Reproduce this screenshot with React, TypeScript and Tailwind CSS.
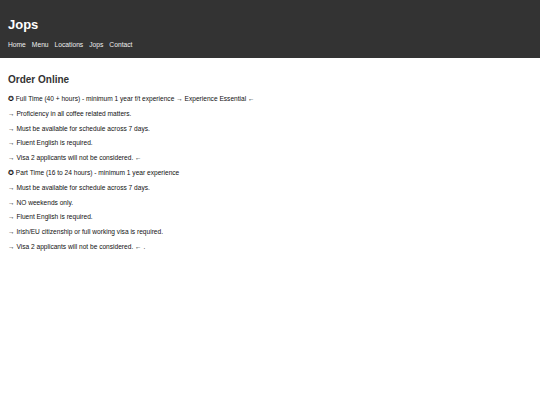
const nav = ["Home", "Menu", "Locations", "Jops", "Contact"];

const lines = [
  "✪ Full Time (40 + hours) - minimum 1 year f/t experience → Experience Essential ←",
  "→ Proficiency in all coffee related matters.",
  "→ Must be available for schedule across 7 days.",
  "→ Fluent English is required.",
  "→ Visa 2 applicants will not be considered. ←",
  "✪ Part Time (16 to 24 hours) - minimum 1 year experience",
  "→ Must be available for schedule across 7 days.",
  "→ NO weekends only.",
  "→ Fluent English is required.",
  "→ Irish/EU citizenship or full working visa is required.",
  "→ Visa 2 applicants will not be considered. ← .",
];

export default function App() {
  return (
    <div className="min-h-[405px] bg-white font-['Liberation_Sans',Arial,sans-serif]">
      <header className="h-[58px] bg-[#333333] px-2 pt-[17px] text-white">
        <h1 className="text-[13px] font-bold leading-[16px]">Jops</h1>
        <nav className="mt-[8px] flex gap-[6px] text-[6.7px] leading-[8px] text-[#eeeeee]">
          {nav.map((n) => (
            <a key={n}>{n}</a>
          ))}
        </nav>
      </header>
      <main className="px-2 pt-[16px] text-[#111111]">
        <h2 className="text-[10px] font-bold leading-[12px] text-[#333333]">Order Online</h2>
        <div className="mt-[9px] flex flex-col gap-[6.8px]">
          {lines.map((l, i) => (
            <p key={i} className="text-[6.6px] leading-[8px]">
              {l}
            </p>
          ))}
        </div>
      </main>
    </div>
  );
}
